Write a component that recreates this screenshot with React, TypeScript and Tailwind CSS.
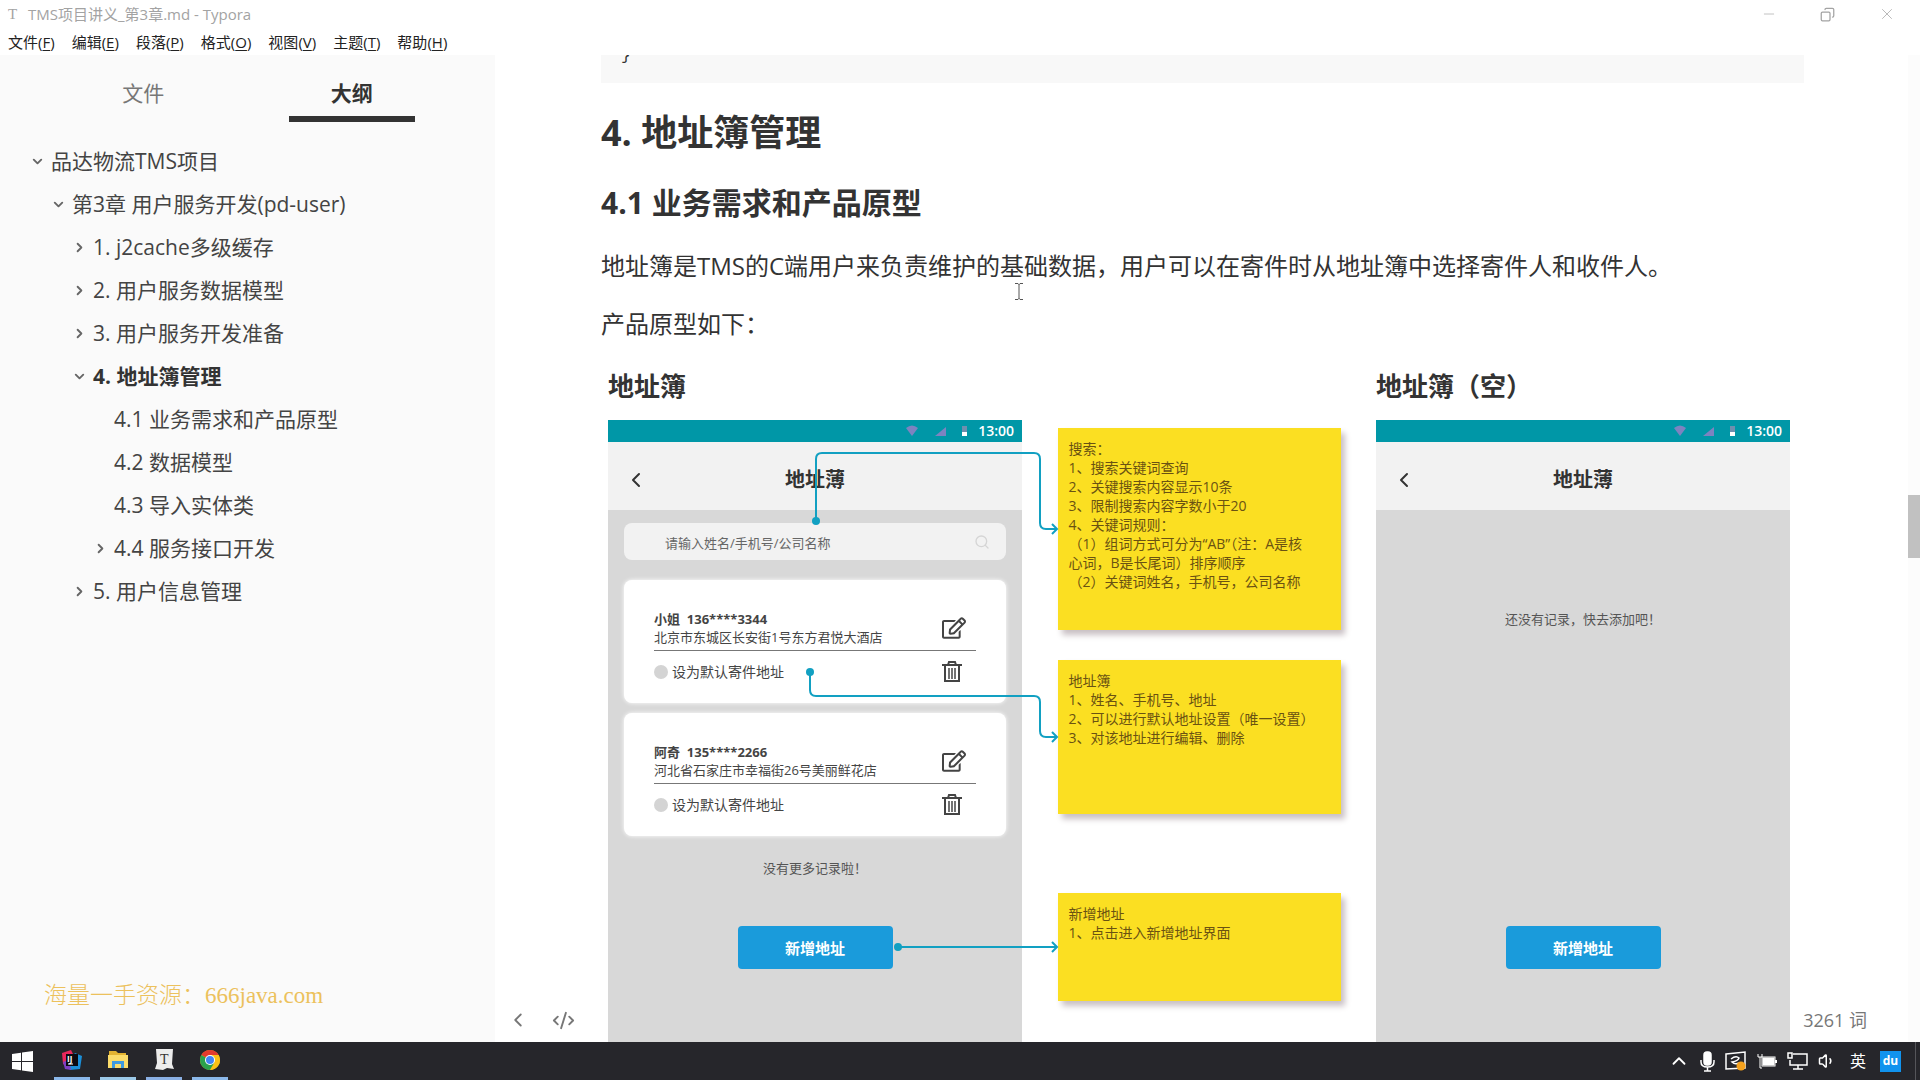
import { ChevronDown, ChevronLeft, ChevronRight, ChevronUp, CodeXml, Minus, Copy, X, Search, Volume1 } from 'lucide-react';
import { FaRegEdit } from 'react-icons/fa';

type OutlineItem = {
    text: string;
    pad: string;
    arrow?: 'down' | 'right';
    active?: boolean;
}

const menus = [
    ['文件', 'F'],
    ['编辑', 'E'],
    ['段落', 'P'],
    ['格式', 'O'],
    ['视图', 'V'],
    ['主题', 'T'],
    ['帮助', 'H'],
];

const outline: OutlineItem[] = [
    { text: '品达物流TMS项目', pad: 'pl-[30px]', arrow: 'down' },
    { text: '第3章 用户服务开发(pd-user)', pad: 'pl-[51px]', arrow: 'down' },
    { text: '1. j2cache多级缓存', pad: 'pl-[72px]', arrow: 'right' },
    { text: '2. 用户服务数据模型', pad: 'pl-[72px]', arrow: 'right' },
    { text: '3. 用户服务开发准备', pad: 'pl-[72px]', arrow: 'right' },
    { text: '4. 地址簿管理', pad: 'pl-[72px]', arrow: 'down', active: true },
    { text: '4.1 业务需求和产品原型', pad: 'pl-[93px]' },
    { text: '4.2 数据模型', pad: 'pl-[93px]' },
    { text: '4.3 导入实体类', pad: 'pl-[93px]' },
    { text: '4.4 服务接口开发', pad: 'pl-[93px]', arrow: 'right' },
    { text: '5. 用户信息管理', pad: 'pl-[72px]', arrow: 'right' },
];

function TopBar() {
    return (
        <header className="shrink-0 bg-white">
            <div className="flex h-7 items-center justify-between pl-2 pr-6 text-[#a3a3a3]">
                <div className="flex items-center gap-3 text-[15px] leading-5">
                    <span className="w-2 font-['Liberation_Serif',serif]">T</span>
                    <span>TMS项目讲义_第3章.md - Typora</span>
                </div>
                <div className="flex items-center gap-[43px]">
                    <button aria-label="最小化"><Minus size={16} strokeWidth={1} /></button>
                    <button aria-label="还原"><Copy size={15} strokeWidth={2} className="-scale-x-100" /></button>
                    <button aria-label="关闭"><X size={18} strokeWidth={1} /></button>
                </div>
            </div>
            <nav className="flex h-[27px] items-center gap-[17px] pl-2 text-[15px] leading-5 text-[#222]">
                {menus.map(([name, key]) => (
                    <button key={key}>{name}(<u className="underline-offset-2">{key}</u>)</button>
                ))}
            </nav>
        </header>
    )
}

function Sidebar() {
    return (
        <aside className="flex w-[495px] shrink-0 flex-col bg-[#fafafa] text-[21px] text-[#444]">
            <div className="flex h-[67px] px-[39px]">
                <button className="flex flex-1 justify-center pt-[22px] leading-8 text-[#777]">文件</button>
                <button className="flex flex-1 justify-center font-bold text-[#333]">
                    <span className="h-full w-[126px] border-b-[6px] border-[#333] pt-[22px] leading-8">大纲</span>
                </button>
            </div>
            <ul className="mt-[18px]">
                {outline.map((item) => (
                    <li key={item.text} className={item.pad}>
                        <a href="#" className={item.active ? 'flex h-[43px] items-center font-bold text-[#333]' : 'flex h-[43px] items-center'}>
                            <span className="flex w-[21px] pr-1 shrink-0 text-[#666]">
                                {item.arrow === 'down' && <ChevronDown size={15} strokeWidth={3} />}
                                {item.arrow === 'right' && <ChevronRight size={15} strokeWidth={3} />}
                            </span>
                            {item.text}
                        </a>
                    </li>
                ))}
            </ul>
            <p className="mt-auto mb-7 pl-11 font-['Liberation_Serif','Noto_Sans_CJK_SC',serif] text-[23px] leading-9 font-light text-[#ecc15c]">海量一手资源：666java.com</p>
        </aside>
    )
}

function PhoneHead() {
    return (
        <>
            <div className="flex h-[22px] items-center justify-end gap-2.5 bg-[#0097a7] pr-2 text-white">
                <svg width="62" height="12" viewBox="0 0 62 12">
                    <path d="M0 3q6-5 12 0L6 11z" fill="#7d83c0" />
                    <path d="M29 11 40 2V11z" fill="#7d83c0" />
                    <path d="M56 1H61V7H56z" fill="#6f8fae" />
                    <path d="M56 7H61V11H56z" fill="#fff" />
                </svg>
                <span className="text-sm leading-5 font-semibold">13:00</span>
            </div>
            <div className="relative flex h-[68px] items-center justify-center bg-[#f2f2f2] pt-2 text-[#333]">
                <button aria-label="返回" className="absolute left-4"><ChevronLeft size={24} strokeWidth={2} /></button>
                <span className="text-xl leading-7 font-bold">地址薄</span>
            </div>
        </>
    )
}

function TrashIcon() {
    return (
        <svg width="20" height="22" viewBox="0 0 20 22" fill="none" stroke="currentColor" strokeWidth="2">
            <path d="M0 4H20M6 4 7 1H13L14 4M3 5V20H17V5" />
            <path d="M7 7V18M10 7V18M13 7V18" strokeWidth="1.500" />
        </svg>
    )
}

function AddressCard({ name, phone, address }: { name: string; phone: string; address: string }) {
    return (
        <div className="h-[123px] rounded-lg bg-white px-[30px] pt-[30px] text-[13px] text-[#444] shadow-[0_0_4px_#fff]">
            <div className="flex items-center justify-between border-b border-[#777] pr-2.5 pb-1">
                <div className="leading-[18px]">
                    <p className="font-bold">{name}&nbsp; {phone}</p>
                    <p>{address}</p>
                </div>
                <button aria-label="编辑"><FaRegEdit size={24} /></button>
            </div>
            <div className="flex h-[42px] items-center justify-between pr-3.5">
                <label className="flex items-center gap-1 text-sm">
                    <input type="radio" name="default-address" className="size-3.5 appearance-none rounded-full bg-[#d4d4d4]" />
                    设为默认寄件地址
                </label>
                <button aria-label="删除"><TrashIcon /></button>
            </div>
        </div>
    )
}

function AddButton() {
    return (
        <button className="mx-auto h-[43px] w-[155px] rounded bg-[#1a9bdb] text-[15px] font-bold text-white">新增地址</button>
    )
}

function Note({ lines, className }: { lines: string[]; className: string }) {
    return (
        <div className={`bg-[#fbdf22] px-[11px] pt-[11px] text-sm leading-[19px] text-[#6a5212] shadow-[4px_5px_6px_#c9c0c4] ${className}`}>
            {lines.map((line) => <p key={line} className="whitespace-nowrap">{line}</p>)}
        </div>
    )
}

function Prototype() {
    return (
        <figure className="relative mt-5 ml-[7px] flex w-[1182px] justify-between">
            <section className="w-[414px]">
                <h4 className="pt-1.5 text-[26px] leading-9 font-bold">地址簿</h4>
                <div className="mt-4">
                    <PhoneHead />
                    <div className="flex h-[560px] flex-col bg-[#d8d8d8] px-4 pt-[13px]">
                        <div className="flex h-[37px] items-center rounded-lg bg-[#f2f2f2] pr-4 pl-[41px]">
                            <input aria-label="搜索" placeholder="请输入姓名/手机号/公司名称" className="min-w-0 flex-1 pt-1 text-[13px] outline-none placeholder:text-[#666]" />
                            <Search size={16} className="text-[#d5d5d5]" />
                        </div>
                        <div className="mt-5 mb-[22px] flex flex-col gap-2.5">
                            <AddressCard name="小姐" phone="136****3344" address="北京市东城区长安街1号东方君悦大酒店" />
                            <AddressCard name="阿奇" phone="135****2266" address="河北省石家庄市幸福街26号美丽鲜花店" />
                        </div>
                        <p className="mb-12 text-center text-[13px] leading-5 text-[#555]">没有更多记录啦！</p>
                        <AddButton />
                    </div>
                </div>
            </section>

            <section className="w-[283px] pt-[66px]">
                <Note className="h-[202px]" lines={[
                    '搜索：',
                    '1、搜索关键词查询',
                    '2、关键搜索内容显示10条',
                    '3、限制搜索内容字数小于20',
                    '4、关键词规则：',
                    '（1）组词方式可分为“AB”（注：A是核',
                    '心词，B是长尾词）排序顺序',
                    '（2）关键词姓名，手机号，公司名称',
                ]} />
                <Note className="mt-[30px] h-[154px]" lines={[
                    '地址簿',
                    '1、姓名、手机号、地址',
                    '2、可以进行默认地址设置（唯一设置）',
                    '3、对该地址进行编辑、删除',
                ]} />
                <Note className="mt-[79px] h-[108px]" lines={['新增地址', '1、点击进入新增地址界面']} />
            </section>

            <section className="w-[414px]">
                <h4 className="pt-1.5 text-[26px] leading-9 font-bold">地址簿（空）</h4>
                <div className="mt-4">
                    <PhoneHead />
                    <div className="flex h-[560px] flex-col bg-[#d8d8d8] pt-[99px]">
                        <p className="mb-[297px] text-center text-[13px] leading-5 text-[#555]">还没有记录，快去添加吧！</p>
                        <AddButton />
                    </div>
                </div>
            </section>

            {/* arrows from the screen to the notes */}
            <svg className="pointer-events-none absolute top-0 left-0" width="1182" height="680" fill="none" stroke="#12a0c2" strokeWidth="2">
                <path d="M208 159V97q0-6 6-6H426q6 0 6 6v64q0 6 6 6h11m-5-5 5 5-5 5" />
                <path d="M202 310v18q0 6 6 6H426q6 0 6 6v29q0 6 6 6h11m-5-5 5 5-5 5" />
                <path d="M290 585H449m-5-5 5 5-5 5" />
                <g fill="#12a0c2" stroke="none">
                    <circle cx="208" cy="159" r="4" />
                    <circle cx="202" cy="310" r="4" />
                    <circle cx="290" cy="585" r="4" />
                </g>
            </svg>
        </figure>
    )
}

function Taskbar() {
    return (
        <footer className="flex h-[38px] shrink-0 items-stretch justify-between bg-[#26262b] text-white">
            <div className="flex gap-2.5">
                <button aria-label="开始" className="flex w-11 items-center justify-center">
                    <svg width="21" height="21" viewBox="0 0 21 21" fill="#fff"><path d="M0 3 9 1.700V10H0zM10 1.500 21 0V10H10zM0 11H9V19.300L0 18zM10 11H21V21L10 19.500z" /></svg>
                </button>
                <button aria-label="IntelliJ IDEA" className="flex w-9 items-center justify-center border-b-[3px] border-[#8bb8ea]">
                    <svg width="20" height="20" viewBox="0 0 20 20">
                        <path d="M0 3 9 0 13 8 6 17 1 14z" fill="#e8275b" />
                        <path d="M13 3 20 6 18 19 8 20 6 14z" fill="#1b8fd8" />
                        <path d="M1 12 7 10 9 20 3 19z" fill="#7c3fc4" />
                        <rect x="4" y="4" width="12" height="12" fill="#0b0b12" />
                        <text x="5" y="12" fontSize="8" fontWeight="700" fill="#fff">IJ</text>
                        <rect x="6" y="13.500" width="5" height="1" fill="#fff" />
                    </svg>
                </button>
                <button aria-label="文件资源管理器" className="flex w-9 items-center justify-center border-b-[3px] border-[#9cc9e8]">
                    <svg width="20" height="19" viewBox="0 0 20 19">
                        <path d="M1 1H8L10 3H18V8H1z" fill="#e3b331" />
                        <path d="M0 5H20V18H0z" fill="#fbdc6a" />
                        <path d="M4 18V11H16V18H13V14H7V18z" fill="#3f9ae0" />
                    </svg>
                </button>
                <button aria-label="Typora" className="flex w-9 items-center justify-center border-b-[3px] border-[#8bb0e4]">
                    <svg width="19" height="21" viewBox="0 0 19 21">
                        <path d="M1 0H18L17 15 19 20 12 19 8 21 0 20 2 14z" fill="#ececec" />
                        <text x="5" y="15" fontSize="14" fontFamily="Liberation Serif" fill="#333">T</text>
                    </svg>
                </button>
                <button aria-label="Chrome" className="flex w-9 items-center justify-center border-b-[3px] border-[#8bb8ea]">
                    <svg width="20" height="20" viewBox="0 0 20 20">
                        <circle cx="10" cy="10" r="10" fill="#fbc116" />
                        <path d="M10 10 1.340 5A10 10 0 0 1 18.660 5z" fill="#e33b2e" />
                        <path d="M10 10V5H18.660A10 10 0 0 1 10 20z" fill="#fbc116" />
                        <path d="M1.340 5A10 10 0 0 0 10 20L14.300 12.500 10 10z" fill="#2ba24c" />
                        <circle cx="10" cy="10" r="5" fill="#fff" />
                        <circle cx="10" cy="10" r="4" fill="#4285f4" />
                    </svg>
                </button>
            </div>
            <div className="flex items-center gap-2.5 pr-1">
                <ChevronUp size={22} strokeWidth={2} />
                <svg width="15" height="21" viewBox="0 0 15 21" fill="none" stroke="#fff" strokeWidth="1.500">
                    <rect x="4" y="1" width="7" height="13" rx="3" fill="#fff" />
                    <path d="M1 9v2q0 5 6.500 5T14 11V9M7.500 16v4M4 20h7" />
                </svg>
                <svg width="22" height="21" viewBox="0 0 22 21" fill="none" stroke="#fff" strokeWidth="1.500">
                    <path d="M1 3 20 1V17L1 18z" />
                    <path d="M6 8q5-4 8-1-1 3-7 4 3 3 7 1" />
                    <circle cx="16" cy="15" r="4.500" fill="#f5a11c" stroke="none" />
                </svg>
                <svg width="20" height="16" viewBox="0 0 20 16" fill="none" stroke="#fff">
                    <path d="M1 1v3h4V1M3 4v11h2" />
                    <rect x="5" y="4" width="13" height="9" />
                    <path d="M6 5h11v7H6z" fill="#fff" />
                    <path d="M19 7v3" strokeWidth="2" />
                </svg>
                <svg width="21" height="18" viewBox="0 0 21 18" fill="none" stroke="#fff" strokeWidth="1.500">
                    <path d="M6 2H20V13H3V8M11 13v4M6 17h10M1 1h4v5H1z" />
                </svg>
                <Volume1 size={18} strokeWidth={2} />
                <span className="mx-1 text-base">英</span>
                <span className="flex size-[21px] items-center justify-center bg-[#1193ee] text-xs font-bold">du</span>
                <span className="h-full w-px ml-1 bg-[#55555a]"></span>
            </div>
        </footer>
    )
}

function App() {
    return (
        <div className="flex h-screen flex-col overflow-hidden bg-white font-['Open_Sans','Noto_Sans_CJK_SC',sans-serif]">
            <TopBar />
            <div className="flex min-h-0 flex-1">
                <Sidebar />
                <main className="relative min-w-0 flex-1 overflow-hidden pr-[104px] pl-[106px] text-2xl text-[#333]">
                    <pre className="h-7 overflow-hidden bg-[#f8f8f8] pl-5 font-['Liberation_Mono',monospace] text-base leading-[2px]">{'}'}</pre>
                    <h2 className="mt-[26px] text-4xl leading-[48px] font-bold">4. 地址簿管理</h2>
                    <h3 className="mt-[26px] text-3xl leading-10 font-bold">4.1 业务需求和产品原型</h3>
                    <p className="mt-[25px] leading-9">地址簿是TMS的C端用户来负责维护的基础数据，用户可以在寄件时从地址簿中选择寄件人和收件人。</p>
                    <p className="mt-[22px] leading-9">产品原型如下：</p>
                    <Prototype />

                    <div className="absolute inset-x-0 bottom-0 flex h-11 items-center justify-between pr-[41px] pl-3 text-[#777]">
                        <div className="flex items-center gap-[23px]">
                            <button aria-label="隐藏侧边栏"><ChevronLeft size={22} /></button>
                            <button aria-label="源代码模式"><CodeXml size={23} strokeWidth={2} /></button>
                        </div>
                        <span className="text-lg">3261 词</span>
                    </div>

                    {/* mouse pointer */}
                    <svg className="absolute top-[228px] left-[520px]" width="8" height="17" fill="none" stroke="#555"><path d="M0 .5H3L4 1.500 5 .5H8M4 1V16M0 16.500H3L4 15.500 5 16.500H8" /></svg>
                </main>
                <div className="w-3 shrink-0 bg-[#fcfcfc] pt-[440px]">
                    <div className="h-[63px] bg-[#c1c1c1]"></div>
                </div>
            </div>
            <Taskbar />
        </div>
    )
}

export default App;
